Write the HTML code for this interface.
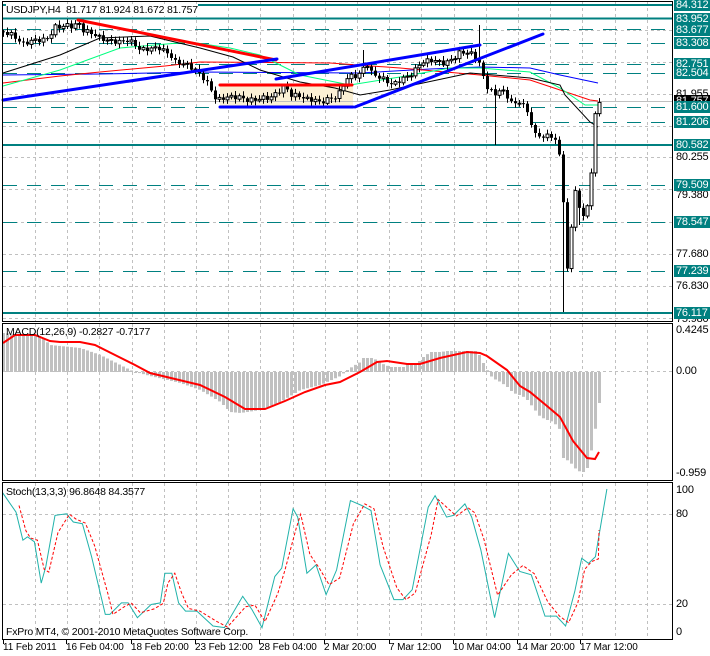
<!DOCTYPE html>
<html><head><meta charset="utf-8">
<style>
html,body{margin:0;padding:0;background:#fff;}
#w{position:relative;width:710px;height:656px;overflow:hidden;background:#fff;font-family:"Liberation Sans",sans-serif;font-size:11px;}
svg{position:absolute;left:0;top:0;}
.l{position:absolute;left:674px;height:12px;line-height:12px;font-size:11px;letter-spacing:-0.2px;padding:0 2px;white-space:nowrap;}
.t{background:#008080;color:#fff;width:32px;}
.k{background:#000;color:#fff;width:32px;}
.p{color:#000;}
.tx{position:absolute;font-size:10.5px;letter-spacing:-0.2px;color:#000;white-space:nowrap;line-height:12px;}
.ta{font-size:10px;letter-spacing:-0.1px;}
</style></head><body>
<div id="w">
<svg width="710" height="656" xmlns="http://www.w3.org/2000/svg">
<g id="grid" stroke="#c0c0c0" stroke-dasharray="3,3" stroke-width="1"></g>
<g stroke="#c0c0c0" stroke-dasharray="3,3">
<line x1="3" y1="30.5" x2="672" y2="30.5"/><line x1="3" y1="62.5" x2="672" y2="62.5"/><line x1="3" y1="94.5" x2="672" y2="94.5"/><line x1="3" y1="126.5" x2="672" y2="126.5"/><line x1="3" y1="157.5" x2="672" y2="157.5"/><line x1="3" y1="189.5" x2="672" y2="189.5"/><line x1="3" y1="222.5" x2="672" y2="222.5"/><line x1="3" y1="254.5" x2="672" y2="254.5"/><line x1="3" y1="286.5" x2="672" y2="286.5"/><line x1="3" y1="318.5" x2="672" y2="318.5"/>
<line x1="3" y1="371.5" x2="672" y2="371.5"/>
<line x1="3" y1="514.5" x2="672" y2="514.5"/><line x1="3" y1="604.5" x2="672" y2="604.5"/>
</g>
<rect x="220" y="85" width="133" height="22" fill="#fbf0d4"/>
<g stroke="#008080">
<line x1="3" y1="5" x2="672" y2="5" stroke-width="2"/>
<line x1="3" y1="18.5" x2="672" y2="18.5" stroke-width="2"/>
<line x1="3" y1="145" x2="672" y2="145" stroke-width="2"/>
<line x1="3" y1="313" x2="672" y2="313" stroke-width="2"/>
<g stroke-dasharray="14,10" stroke-width="1">
<line x1="3" y1="29.5" x2="672" y2="29.5"/><line x1="3" y1="43.5" x2="672" y2="43.5"/><line x1="3" y1="64.5" x2="672" y2="64.5"/><line x1="3" y1="73.5" x2="672" y2="73.5"/><line x1="3" y1="107.5" x2="672" y2="107.5"/><line x1="3" y1="122.5" x2="672" y2="122.5"/><line x1="3" y1="185.5" x2="672" y2="185.5"/><line x1="3" y1="222.5" x2="672" y2="222.5"/><line x1="3" y1="271.5" x2="672" y2="271.5"/>
</g></g>
<line x1="3" y1="101.5" x2="672" y2="101.5" stroke="#c0c0c0"/>
<g fill="none" stroke-width="1">
<polyline stroke="#0000ff" points="3,75 100,74 200,72 360,73 430,69 480,67 530,68 560,75 598,83"/>
<polyline stroke="#ff0000" points="3,83 60,76 100,72 165,66 200,62 330,63 400,68 480,75 530,80 560,90 590,100 598,101"/>
<polyline stroke="#00ff7f" points="3,86 60,70 120,48 190,42 230,48 260,55 300,75 350,85 400,77 450,68 480,68 530,72 560,88 585,105 600,105"/>
<polyline stroke="#000" points="3,73 60,55 100,38 150,36 200,48 233,57 260,70 300,82 335,88 360,95 390,90 470,73 530,78 560,85 565,95 590,122 598,127"/>
</g>
<g id="candles"></g>
<g stroke-width="3" stroke-linecap="round">
<line x1="78" y1="20" x2="276" y2="60" stroke="#ff0000"/>
<line x1="3" y1="100" x2="277" y2="59" stroke="#0000ff"/>
<line x1="276" y1="79" x2="480" y2="45" stroke="#0000ff"/>
<line x1="355" y1="107" x2="543" y2="34" stroke="#0000ff"/>
<line x1="220" y1="107" x2="353" y2="107" stroke="#0000ff"/>
<line x1="220" y1="85" x2="352" y2="85" stroke="#ff0000"/>
</g>
<g id="hist" fill="#c0c0c0"></g>
<polyline fill="none" stroke="#ff0000" stroke-width="2" points="3,343 15,335 35,335 50,341 60,342 80,342 95,345 115,355 135,365 150,373 175,379 200,385 225,397 245,409 265,409 285,401 305,392 325,385 340,382 360,372 377,362 387,361 407,364 420,364 440,358 467,352 480,353 487,356 507,370 520,386 530,392 547,406 560,417 573,441 587,458 595,459 599,452"/>
<polyline id="st1" fill="none" stroke="#20b2aa" stroke-width="1"/>
<polyline id="st2" fill="none" stroke="#ff0000" stroke-width="1" stroke-dasharray="3,2"/>
<g stroke="#000" fill="none" stroke-width="1">
<rect x="2.5" y="1.5" width="670" height="320"/>
<rect x="2.5" y="323.5" width="670" height="157"/>
<rect x="2.5" y="482.5" width="670" height="157"/>
</g>
<g id="ticks" stroke="#000"></g>
</svg>

<div class="l p" style="top:88px">81.955</div>
<div class="l p" style="top:116px">81.105</div>
<div class="l p" style="top:151px">80.255</div>
<div class="l p" style="top:189px">79.380</div>
<div class="l p" style="top:248px">77.680</div>
<div class="l p" style="top:280px">76.830</div>
<div class="l p" style="top:313px">75.980</div>
<div class="l t" style="top:-1px">84.312</div>
<div class="l t" style="top:13px">83.952</div>
<div class="l t" style="top:24px">83.677</div>
<div class="l t" style="top:37px">83.308</div>
<div class="l t" style="top:58px">82.751</div>
<div class="l t" style="top:67px">82.504</div>
<div class="l k" style="top:95px">81.757</div>
<div class="l t" style="top:101px">81.600</div>
<div class="l t" style="top:116px">81.206</div>
<div class="l t" style="top:139px">80.582</div>
<div class="l t" style="top:179px">79.509</div>
<div class="l t" style="top:216px">78.547</div>
<div class="l t" style="top:265px">77.239</div>
<div class="l t" style="top:307px">76.117</div>
<div class="l p" style="top:324px;background:#fff">0.4245</div>
<div class="l p" style="top:365px">0.00</div>
<div class="l p" style="top:467px">-0.959</div>
<div class="l p" style="top:484px;background:#fff">100</div>
<div class="l p" style="top:508px">80</div>
<div class="l p" style="top:598px">20</div>
<div class="l p" style="top:626px">0</div>

<div class="tx" style="left:6px;top:4px;background:#fff">USDJPY,H4&nbsp; 81.717 81.924 81.672 81.757</div>
<div class="tx" style="left:6px;top:326px">MACD(12,26,9) -0.2827 -0.7177</div>
<div class="tx" style="left:6px;top:486px">Stoch(13,3,3) 96.8648 84.3577</div>
<div class="tx" style="left:6px;top:626px">FxPro MT4, © 2001-2010 MetaQuotes Software Corp.</div>

<div class="tx ta" style="left:3px;top:642px">11 Feb 2011</div>
<div class="tx ta" style="left:66px;top:642px">16 Feb 04:00</div>
<div class="tx ta" style="left:131px;top:642px">18 Feb 20:00</div>
<div class="tx ta" style="left:195px;top:642px">23 Feb 12:00</div>
<div class="tx ta" style="left:259px;top:642px">28 Feb 04:00</div>
<div class="tx ta" style="left:324px;top:642px">2 Mar 20:00</div>
<div class="tx ta" style="left:389px;top:642px">7 Mar 12:00</div>
<div class="tx ta" style="left:453px;top:642px">10 Mar 04:00</div>
<div class="tx ta" style="left:517px;top:642px">14 Mar 20:00</div>
<div class="tx ta" style="left:580px;top:642px">17 Mar 12:00</div>
</div>
<script>
(function(){
function ip(P,x){for(var i=1;i<P.length;i++){if(x<=P[i][0]){var a=P[i-1],b=P[i];return a[1]+(b[1]-a[1])*(x-a[0])/(b[0]-a[0]);}}return P[P.length-1][1];}
var g='';for(var x=35;x<672;x+=32.2){var X=Math.round(x)+.5;g+='<line x1="'+X+'" y1="2" x2="'+X+'" y2="321"/><line x1="'+X+'" y1="324" x2="'+X+'" y2="480"/><line x1="'+X+'" y1="483" x2="'+X+'" y2="639"/>';}
document.getElementById('grid').innerHTML=g;
var t='';[3,66,131,195,259,324,389,453,517,580].forEach(function(x){t+='<line x1="'+(x+.5)+'" y1="640" x2="'+(x+.5)+'" y2="644"/>';});
document.getElementById('ticks').innerHTML=t;
var C=[[3,32],[12,35],[18,40],[22,44],[28,42],[35,40],[45,40],[50,35],[55,27],[60,27],[68,25],[73,27],[78,22],[82,30],[88,32],[95,35],[100,38],[105,40],[118,42],[128,40],[135,45],[140,50],[155,48],[160,48],[165,52],[170,55],[175,62],[185,64],[195,70],[200,75],[205,80],[210,88],[215,98],[220,100],[225,97],[240,97],[245,100],[255,100],[260,98],[270,98],[280,90],[285,86],[290,95],[300,96],[305,99],[315,100],[320,103],[325,100],[335,97],[340,92],[345,80],[350,76],[358,76],[363,68],[366,62],[370,72],[378,77],[385,80],[392,85],[400,80],[410,75],[415,70],[420,63],[430,60],[440,62],[445,64],[450,60],[455,57],[460,52],[470,53],[475,57],[480,65],[485,85],[490,90],[495,95],[500,88],[505,95],[510,100],[515,105],[520,100],[525,108],[530,120],[535,135],[545,137],[550,135],[555,140],[560,160],[563,200],[566,270],[570,270],[572,185],[576,190],[579,210],[583,215],[587,205],[590,200],[593,125],[596,105],[599,103]];
var s='',prev=ip(C,1);
for(var i=0;i<150;i++){var x=3+i*4;if(x>599)break;var c=ip(C,x)+Math.sin(i*2.3)*2.2;var o=prev;prev=c;
var top=Math.min(o,c),bot=Math.max(o,c);if(bot-top<1){bot=top+1;}
var hi=top-1.5-Math.abs(Math.sin(i*1.7))*3,lo=bot+1.5+Math.abs(Math.cos(i*1.3))*3;
if(x==495)lo=145;if(x==563)lo=312;if(x==579)lo=225;if(x==363)hi=50;if(x==479)hi=25;
s+='<line x1="'+(x+.5)+'" y1="'+hi+'" x2="'+(x+.5)+'" y2="'+lo+'" stroke="#000"/>';
var down=c>o;s+='<rect x="'+(x-1)+'" y="'+top+'" width="3" height="'+(bot-top)+'" fill="'+(down?'#000':'#fff')+'" stroke="#000" stroke-width="'+(down?0:1)+'"/>';}
document.getElementById('candles').innerHTML=s;
var H=[[3,333],[40,336],[50,345],[80,348],[100,355],[120,365],[130,370],[135,372],[150,376],[180,383],[200,390],[220,402],[230,412],[240,413],[260,410],[280,402],[300,390],[320,385],[340,376],[347,370],[353,366],[360,362],[363,358],[373,358],[380,363],[390,367],[403,367],[407,363],[417,363],[423,357],[430,352],[440,352],[447,351],[477,351],[483,363],[488,372],[492,378],[500,382],[507,387],[513,393],[522,396],[527,400],[533,408],[540,417],[547,420],[553,422],[560,430],[563,458],[570,462],[573,467],[580,472],[583,472],[587,468],[592,446],[596,423],[599,403]];
var h='';for(var x=3;x<=599;x+=4){var v=ip(H,x),a=Math.min(v,372),b=Math.max(v,372);h+='<rect x="'+(x-1)+'" y="'+a+'" width="3" height="'+Math.max(b-a,1)+'"/>';}
document.getElementById('hist').innerHTML=h;
var S=[[5,65],[35,125],[50,210],[60,200],[75,215],[90,340],[100,290],[120,135],[145,130],[160,155],[180,160],[200,260],[230,435],[240,435],[265,400],[280,400],[300,445],[330,405],[350,400],[360,310],[375,310],[390,400],[405,425],[430,425],[465,470],[490,475],[530,380],[550,420],[572,475],[600,320],[615,295],[640,115],[650,140],[670,310],[690,285],[712,375],[735,300],[765,90],[790,105],[810,120],[830,285],[860,390],[880,390],[900,360],[935,110],[950,75],[975,140],[990,135],[1015,100],[1030,140],[1050,240],[1080,445],[1110,250],[1135,305],[1160,315],[1190,440],[1215,440],[1235,470],[1255,365],[1270,265],[1285,280],[1300,260],[1325,55]];
var p1='',p2='';S.forEach(function(q,i){var x=q[0]*0.458,y=490+(q[1]-58)*0.33;p1+=x.toFixed(1)+','+y.toFixed(1)+' ';
if(i>0&&i<S.length-1){var y2=490+((S[i-1][1]+q[1]*2)/3-58)*0.33;p2+=(x+3).toFixed(1)+','+y2.toFixed(1)+' ';}});
p2+='599,530';
document.getElementById('st1').setAttribute('points',p1);
document.getElementById('st2').setAttribute('points',p2);
})();
</script>
</body></html>
